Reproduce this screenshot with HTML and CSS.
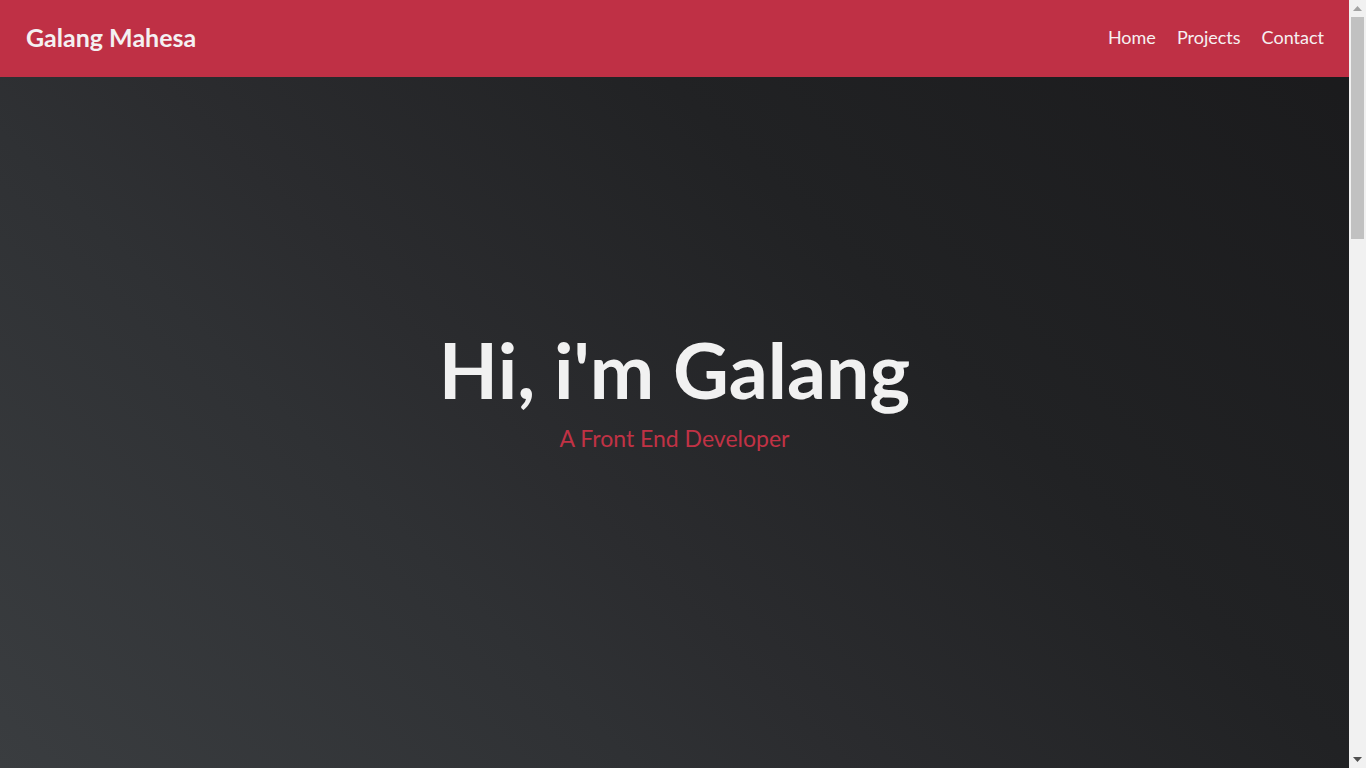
FILE: index.html
```html
<!DOCTYPE html>
<html lang="en">
<head>
<meta charset="utf-8">
<title>Galang Mahesa</title>
<link rel="stylesheet" href="styles.css">
</head>
<body>
<header class="navbar">
  <a class="brand" href="#">Galang Mahesa</a>
  <nav class="nav-links">
    <a href="#">Home</a>
    <a href="#projects">Projects</a>
    <a href="#contact">Contact</a>
  </nav>
</header>
<main>
  <section class="hero">
    <h1 class="hero-title">Hi, i'm Galang</h1>
    <p class="hero-subtitle">A Front End Developer</p>
  </section>
  <section class="section" id="projects"></section>
  <section class="section" id="contact"></section>
</main>
<div class="scrollbar" aria-hidden="true">
  <div class="sb-button">
    <svg width="9" height="5" viewBox="0 0 9 5"><polygon points="4.5,0 9,5 0,5" fill="#a3a3a3"/></svg>
  </div>
  <div class="sb-track">
    <div class="sb-thumb"></div>
  </div>
  <div class="sb-button">
    <svg width="9" height="5" viewBox="0 0 9 5"><polygon points="0,0 9,0 4.5,5" fill="#505050"/></svg>
  </div>
</div>
</body>
</html>
```
FILE: styles.css
```css
* { box-sizing: border-box; }
html, body { margin: 0; padding: 0; }
body {
  font-family: Lato, "Liberation Sans", sans-serif;
  background: #1c1d1f;
  color: #f1f1f1;
  margin-right: 17px;
}
.navbar {
  position: fixed;
  top: 0;
  left: 0;
  right: 17px;
  z-index: 10;
  height: 77px;
  background: #bf3045;
  display: flex;
  align-items: center;
  justify-content: space-between;
  padding: 0 25px 4px 26px;
}
.brand {
  color: #f4f0f2;
  text-decoration: none;
  font-weight: 700;
  font-size: 25px;
}
.nav-links {
  display: flex;
  gap: 21px;
}
.nav-links a {
  color: #f6f0f2;
  text-decoration: none;
  font-size: 18px;
}
.hero {
  height: 100vh;
  display: flex;
  flex-direction: column;
  align-items: center;
  justify-content: center;
  background: linear-gradient(45deg, #3a3d40 0%, #2f3134 30%, #2b2c2f 40%, #212224 64%, #1a1a1c 100%);
}
.hero-title {
  margin: 8px 0 0;
  font-size: 77px;
  font-weight: 700;
  color: #f1f1f1;
  line-height: 1.2;
}
.hero-subtitle {
  margin: 10px 0 0;
  font-size: 23px;
  line-height: 1.2;
  color: #c13245;
}
.section {
  height: 886px;
  background: #1c1d1f;
}
.scrollbar {
  position: fixed;
  top: 0;
  right: 0;
  width: 17px;
  height: 100vh;
  background: #f1f1f1;
  display: flex;
  flex-direction: column;
  z-index: 20;
}
.sb-button {
  height: 17px;
  flex: none;
  display: flex;
  align-items: center;
  justify-content: center;
}
.sb-track {
  flex: 1;
}
.sb-thumb {
  height: 222px;
  margin: 0 2px;
  background: #c1c1c1;
}
```
